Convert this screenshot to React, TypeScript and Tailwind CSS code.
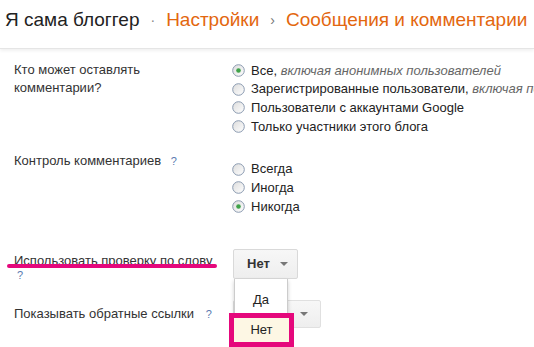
import React from 'react';

const font = { fontFamily: '"Liberation Sans", Arial, sans-serif' };

function Radio({ checked }: { checked?: boolean }) {
  return (
    <svg width="13" height="13" viewBox="0 0 13 13" className="shrink-0">
      <defs>
        <linearGradient id={checked ? 'rg-on' : 'rg-off'} x1="0" y1="0" x2="1" y2="1">
          <stop offset="0%" stopColor="#dcdcdc" />
          <stop offset="100%" stopColor="#ffffff" />
        </linearGradient>
      </defs>
      <circle cx="6.5" cy="6.5" r="5.8" fill={`url(#${checked ? 'rg-on' : 'rg-off'})`} stroke="#8a9ab0" strokeWidth="1" />
      {checked && <circle cx="6.5" cy="6.5" r="2.3" fill="#3fa24a" />}
    </svg>
  );
}

function Option({ checked, children }: { checked?: boolean; children: React.ReactNode }) {
  return (
    <div className="flex h-[18.7px] items-center gap-[6px] whitespace-nowrap text-[13px] text-[#222]">
      <Radio checked={checked} />
      <span>{children}</span>
    </div>
  );
}

function Help() {
  return <span className="text-[11px] text-[#5a7ab0]">?</span>;
}

function Arrow() {
  return <span className="inline-block h-0 w-0 border-x-[4px] border-t-[4px] border-x-transparent border-t-[#777]" />;
}

export default function App() {
  return (
    <div className="h-[347px] w-[534px] overflow-hidden bg-white" style={font}>
      <div className="flex h-[49px] items-start whitespace-nowrap border-b border-[#e5e5e5] pt-[6px] pl-[5px] text-[19px] shadow-[0_2px_3px_rgba(0,0,0,0.06)]">
        <span className="text-[#222]">Я сама блоггер</span>
        <span className="mx-[11px] text-[14px] leading-[28px] text-[#888]">·</span>
        <span className="text-[#e3670f]">Настройки</span>
        <span className="mx-[11px] text-[14px] leading-[28px] text-[#777]">›</span>
        <span className="text-[#e3670f]">Сообщения и комментарии</span>
      </div>

      <div className="text-[13px] text-[#333]">
        <div className="mt-[12px] flex">
          <div className="w-[232px] shrink-0 pl-[14px] leading-[18px]">
            Кто может оставлять
            <br />
            комментарии?
          </div>
          <div>
            <Option checked>
              Все, <i className="text-[#666]">включая анонимных пользователей</i>
            </Option>
            <Option>
              Зарегистрированные пользователи, <i className="text-[#666]">включая пользователей OpenID</i>
            </Option>
            <Option>Пользователи с аккаунтами Google</Option>
            <Option>Только участники этого блога</Option>
          </div>
        </div>

        <div className="mt-[16px] flex">
          <div className="w-[232px] shrink-0 pl-[14px] leading-[18px]">
            Контроль комментариев <span className="ml-[6px]"><Help /></span>
          </div>
          <div className="pt-[8px]">
            <Option>Всегда</Option>
            <Option>Иногда</Option>
            <Option checked>Никогда</Option>
          </div>
        </div>

        <div className="mt-[33px] flex">
          <div className="w-[233px] shrink-0 pl-[14px] pt-[4px] leading-[15px]">
            <div className="relative inline-block whitespace-nowrap">
              Использовать проверку по слову
              <span className="absolute left-[-7px] right-[-5px] top-[11px] h-[4px] rounded-full bg-[#e5087c]" />
            </div>
            <div className="pl-[3px] leading-[14px]">
              <Help />
            </div>
          </div>
          <div className="relative z-10">
            <div className="flex h-[30px] w-[65px] items-center gap-[10px] rounded-[2px] border border-[#d9d9d9] bg-gradient-to-b from-[#f7f7f7] to-[#eeeeee] pl-[13px] text-[13px] font-bold text-[#333]">
              Нет
              <Arrow />
            </div>
            <div className="absolute left-[1px] top-[30px] w-[54px] border border-t-0 border-[#ccc] bg-white shadow-[0_2px_4px_rgba(0,0,0,0.2)]">
              <div className="flex h-[34px] items-start justify-center pt-[11px] text-[#222]">Да</div>
              <div className="-ml-[6px] -mr-[7px] border-[5px] border-[#e5087c]">
                <div className="flex h-[24px] items-end justify-center bg-[#fdf7e4] pb-[2px] text-[#222]">Нет</div>
              </div>
            </div>
          </div>
        </div>

        <div className="mt-[18px] flex items-center">
          <div className="w-[233px] shrink-0 pl-[14px]">
            Показывать обратные ссылки <span className="ml-[8px]"><Help /></span>
          </div>
          <div className="flex h-[28px] w-[88px] items-center justify-end rounded-[2px] border border-[#e0e0e0] bg-gradient-to-b from-[#f7f7f7] to-[#eeeeee] pr-[12px]">
            <Arrow />
          </div>
        </div>
      </div>
    </div>
  );
}
